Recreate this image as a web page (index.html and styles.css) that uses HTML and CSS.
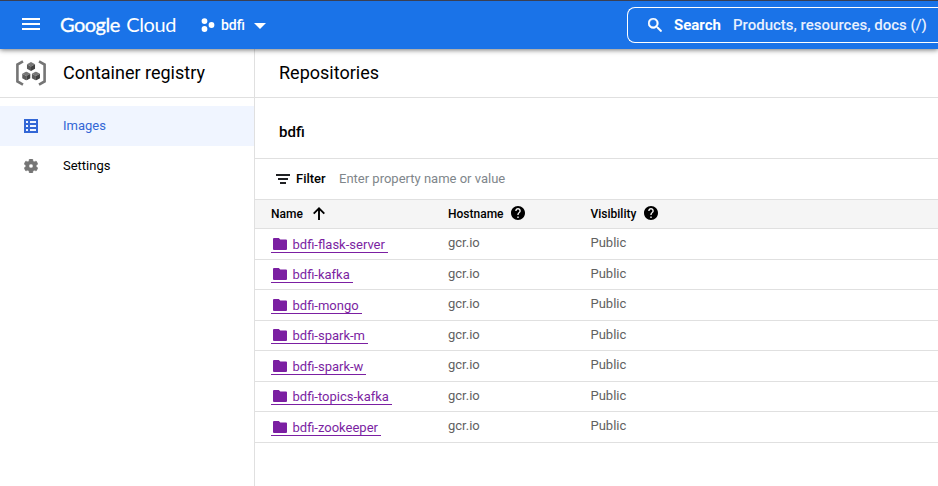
FILE: index.html
```html
<!DOCTYPE html>
<html lang="en">
<head>
<meta charset="utf-8">
<title>Container registry</title>
<link rel="stylesheet" href="styles.css">
</head>
<body>
<svg width="0" height="0" class="defs">
  <symbol id="folder" viewBox="0 0 14 12"><path d="M1 0h4.8l1.5 1.500H13a1 1 0 0 1 1 1V11a1 1 0 0 1-1 1H1a1 1 0 0 1-1-1V1a1 1 0 0 1 1-1z"/></symbol>
  <symbol id="help" viewBox="2 2 20 20"><path d="M12 2C6.48 2 2 6.48 2 12s4.48 10 10 10 10-4.48 10-10S17.52 2 12 2zm1 17h-2v-2h2v2zm2.07-7.75l-.9.92C13.45 12.9 13 13.5 13 15h-2v-.5c0-1.1.45-2.1 1.17-2.83l1.24-1.26c.37-.36.59-.86.59-1.41 0-1.1-.9-2-2-2s-2 .9-2 2H8c0-2.21 1.79-4 4-4s4 1.79 4 4c0 .88-.36 1.68-.93 2.25z"/></symbol>
  <symbol id="cube" viewBox="0 0 10 10"><path fill="#777" d="M5 0l4.5 2.5L5 5 .5 2.5z"/><path fill="#5b5b5b" d="M.5 2.5L5 5v5L.5 7.5z"/><path fill="#424242" d="M9.5 2.5L5 5v5l4.500-2.500z"/></symbol>
</svg>
<header class="topbar">
  <svg class="menu" width="18" height="12" viewBox="0 0 18 12"><path fill="#fff" d="M0 0h18v2H0zM0 5h18v2H0zM0 10h18v2H0z"/></svg>
  <div class="brand"><span class="google">Google</span><span class="cloud">Cloud</span></div>
  <svg class="project-icon" width="14" height="14" viewBox="0 0 14 14" fill="#fff"><circle cx="3.500" cy="3.100" r="2.900"/><circle cx="3.500" cy="11" r="2.900"/><circle cx="10.500" cy="7" r="2.900"/></svg>
  <span class="project">bdfi</span>
  <svg class="caret" width="12" height="6" viewBox="0 0 12 6"><path fill="#fff" d="M0 0h12L6 6z"/></svg>
  <div class="search">
    <svg width="14" height="14" viewBox="3 3 17.500 17.500"><path fill="#fff" stroke="#fff" stroke-width=".6" d="M15.500 14h-.79l-.28-.27A6.471 6.471 0 0 0 16 9.500 6.500 6.500 0 1 0 9.500 16c1.610 0 3.090-.59 4.230-1.570l.27.28v.79l5 4.990L20.490 19l-4.990-5zm-6 0C7.010 14 5 11.990 5 9.500S7.010 5 9.500 5 14 7.010 14 9.500 11.990 14 9.500 14z"/></svg>
    <b>Search</b><span>Products, resources, docs (/)</span>
  </div>
</header>
<div class="layout">
  <aside class="sidebar">
    <div class="product">
      <svg width="30" height="26" viewBox="0 0 30 26">
        <path fill="none" stroke="#757575" stroke-width="2.600" d="M7 1.300L1.400 4.500v17L7 24.700M23 1.300l5.600 3.200v17L23 24.700"/>
        <use href="#cube" x="10.500" y="2" width="9" height="9"/><use href="#cube" x="5.800" y="11.500" width="9" height="9"/><use href="#cube" x="15.400" y="11.500" width="9" height="9"/>
      </svg>
      <span>Container registry</span>
    </div>
    <nav>
      <a class="item active"><svg width="14" height="14" viewBox="0 0 14 14"><path fill="#3367d6" fill-rule="evenodd" d="M0 0h14v14H0zM2 2v2h2V2zM6 2v2h6V2zM2 6v2h2V6zM6 6v2h6V6zM2 10v2h2v-2zM6 10v2h6v-2z"/></svg><span>Images</span></a>
      <a class="item"><svg width="14" height="14" viewBox="2 2 20 20"><path fill="#757575" stroke="#757575" stroke-width=".7" d="M19.430 12.980c.04-.32.07-.64.07-.98s-.03-.66-.07-.98l2.110-1.650c.19-.15.24-.42.12-.64l-2-3.460c-.12-.22-.39-.3-.61-.22l-2.490 1c-.52-.4-1.080-.73-1.690-.98l-.38-2.650C14.460 2.180 14.250 2 14 2h-4c-.25 0-.46.18-.49.42l-.38 2.650c-.61.25-1.170.59-1.690.98l-2.490-1c-.23-.09-.49 0-.61.22l-2 3.460c-.13.22-.07.49.12.64l2.110 1.650c-.04.32-.07.65-.07.98s.03.66.07.98l-2.110 1.650c-.19.15-.24.42-.12.64l2 3.460c.12.22.39.3.61.22l2.490-1c.52.4 1.080.73 1.690.98l.38 2.650c.03.24.24.42.49.42h4c.25 0 .46-.18.49-.42l.38-2.650c.61-.25 1.170-.59 1.690-.98l2.490 1c.23.09.49 0 .61-.22l2-3.460c.12-.22.07-.49-.12-.64l-2.110-1.650zM12 15a3 3 0 1 1 0-6 3 3 0 0 1 0 6z"/></svg><span>Settings</span></a>
    </nav>
  </aside>
  <main class="content">
    <h1>Repositories</h1>
    <h2>bdfi</h2>
    <div class="filter"><svg width="14" height="10" viewBox="0 0 14 10"><path fill="#202124" d="M0 0h14v2H0zM2 4h10v2H2zM4 8h6v2H4z"/></svg><b>Filter</b><span>Enter property name or value</span></div>
    <div class="row head">
      <div>Name<svg class="arrow" width="12" height="13" viewBox="0 0 12 13"><path fill="none" stroke="#000" stroke-width="1.900" d="M6 13V1.500M.7 6.700L6 1.400l5.300 5.300"/></svg></div>
      <div>Hostname<svg class="help" width="14" height="14"><use href="#help"/></svg></div>
      <div>Visibility<svg class="help" width="14" height="14"><use href="#help"/></svg></div>
    </div>
    <div class="row"><a class="link"><svg width="14" height="12"><use href="#folder"/></svg>bdfi-flask-server</a><span>gcr.io</span><span>Public</span></div>
    <div class="row"><a class="link"><svg width="14" height="12"><use href="#folder"/></svg>bdfi-kafka</a><span>gcr.io</span><span>Public</span></div>
    <div class="row"><a class="link"><svg width="14" height="12"><use href="#folder"/></svg>bdfi-mongo</a><span>gcr.io</span><span>Public</span></div>
    <div class="row"><a class="link"><svg width="14" height="12"><use href="#folder"/></svg>bdfi-spark-m</a><span>gcr.io</span><span>Public</span></div>
    <div class="row"><a class="link"><svg width="14" height="12"><use href="#folder"/></svg>bdfi-spark-w</a><span>gcr.io</span><span>Public</span></div>
    <div class="row"><a class="link"><svg width="14" height="12"><use href="#folder"/></svg>bdfi-topics-kafka</a><span>gcr.io</span><span>Public</span></div>
    <div class="row"><a class="link"><svg width="14" height="12"><use href="#folder"/></svg>bdfi-zookeeper</a><span>gcr.io</span><span>Public</span></div>
  </main>
</div>
</body>
</html>
```
FILE: styles.css
```css
* { box-sizing: border-box; }
body { margin: 0; height: 486px; overflow: hidden; background: #fff; font: 13px/20px Roboto, sans-serif; color: #000; display: flex; flex-direction: column; }
svg { display: block; flex: none; }
.defs { position: absolute; }
.topbar { height: 49px; flex: none; display: flex; align-items: center; background: #1a73e8; border-top: 1px solid #3a3f52; color: #fff; padding-left: 22px; box-shadow: 0 1px 5px rgba(0,0,0,.55); z-index: 1; white-space: nowrap; }
.menu { margin-top: -2px; }
.brand { display: flex; justify-content: space-between; margin: -3px 0 0 20px; width: 116px; font: 20px/24px Lato, sans-serif; }
.google { letter-spacing: -.5px; -webkit-text-stroke: .35px #fff; }
.cloud { letter-spacing: -.4px; }
.project-icon { margin-left: 25px; }
.project { margin-left: 6px; font-size: 14px; font-weight: 500; width: 25px; }
.caret { margin-left: 8px; margin-top: 2px; }
.search { margin-left: auto; flex: none; width: 311px; height: 36px; border: 1px solid #fff; border-right: 0; border-radius: 8px 0 0 8px; display: flex; align-items: center; padding-left: 20px; font-size: 15px; }
.search svg { margin-top: -1px; }
.search b { margin-left: 12px; width: 59px; font-weight: 700; }
.search span { color: #e8f0fe; font-weight: 500; }
.layout { flex: 1; display: flex; }
.sidebar { width: 255px; flex: none; border-right: 1px solid #e0e0e0; }
.product { height: 49px; border-bottom: 1px solid #e0e0e0; display: flex; align-items: center; padding-left: 16px; font-size: 18px; }
.product span { margin-left: 17px; }
nav { padding-top: 8px; }
.item { display: flex; align-items: center; height: 40px; padding-left: 24px; }
.item span { margin-left: 25px; }
.active { background: #f0f5ff; color: #3367d6; }
.content { flex: 1; min-width: 0; }
h1 { margin: 0; height: 49px; border-bottom: 1px solid #e0e0e0; padding-left: 24px; font-size: 18px; font-weight: 400; line-height: 48px; }
h2 { margin: 0; height: 61px; border-bottom: 1px solid #e0e0e0; padding: 8px 0 0 24px; font-size: 15px; font-weight: 500; line-height: 52px; }
.filter { height: 41px; border-bottom: 1px solid #e0e0e0; display: flex; align-items: center; padding-left: 21px; }
.filter b { font-weight: 500; margin-left: 6px; width: 43px; }
.filter span { color: #80868b; }
.row { display: grid; grid-template-columns: 177px 142.500px 1fr; height: 30.5px; border-bottom: 1px solid #e0e0e0; padding-left: 16px; align-items: start; }
.row > span { color: #616161; line-height: 28px; }
.head { height: 29px; background: #f5f5f5; font-size: 12px; font-weight: 500; }
.head div { display: flex; align-items: center; height: 28px; }
.head svg { margin-top: -2px; }
.arrow { margin-left: 10px; }
.help { margin-left: 7px; }
.row div:last-child .help { margin-left: 8px; }
.link { justify-self: start; display: flex; align-items: center; margin-top: 5.9px; height: 18px; border-bottom: 1px solid #7b1fa2; color: #7b1fa2; fill: #7b1fa2; padding: 2.300px 3px 0 2px; line-height: 18px; }
.link svg { margin: -1.700px 5.500px 0 0; }
```
